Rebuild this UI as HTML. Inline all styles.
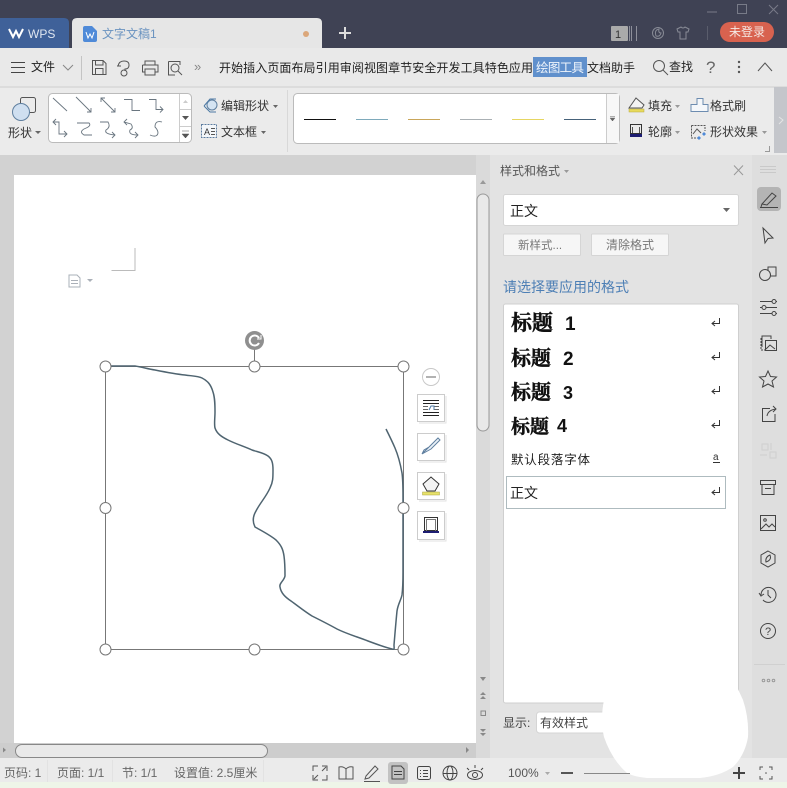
<!DOCTYPE html>
<html><head><meta charset="utf-8"><style>
html,body{margin:0;padding:0;background:#fff;width:787px;height:788px;overflow:hidden}
svg{display:block}
text{font-family:"Liberation Sans","Noto Sans CJK SC",sans-serif;font-size:12px;fill:#333}
.i{fill:none;stroke:#555;stroke-width:1}
.d{fill:none;stroke:#6a7680;stroke-width:.9}
.a{fill:#666}
.h{font-weight:bold;fill:#111;stroke:#111;stroke-width:.45;font-family:"Liberation Sans","Noto Serif CJK SC",serif}
.n{font-weight:bold;fill:#111}
</style></head><body>
<svg width="787" height="788" viewBox="0 0 787 788" xmlns="http://www.w3.org/2000/svg">
<!-- backgrounds -->
<rect width="787" height="788" fill="#cfcfcf"/>
<rect width="787" height="48" fill="#3f4254"/>
<path d="M0 18H64Q69 18 69 23V48H0Z" fill="#3f6199"/>
<path d="M72 48V23Q72 18 77 18H317Q322 18 322 23V48Z" fill="#e6e6e6"/>
<rect y="48" width="787" height="38" fill="#e9e9e9"/>
<rect y="86" width="787" height="2" fill="#dcdcdc"/>
<rect y="88" width="787" height="67" fill="#ebebeb"/>
<rect y="155" width="490" height="588" fill="#d2d2d2"/>
<rect x="14" y="175" width="462" height="568" fill="#fff"/>
<rect x="476" y="155" width="14" height="603" fill="#dadada"/>
<rect x="490" y="155" width="262" height="603" fill="#e3e3e3"/>
<rect x="752" y="155" width="35" height="603" fill="#dedede"/>
<rect y="743" width="476" height="15" fill="#cdcdcd"/>
<rect y="758" width="787" height="24" fill="#ebebeb"/>
<rect y="782" width="787" height="6" fill="#eef5e8"/>

<!-- title tabs -->
<path d="M9 29L13 37L16 31L19 37L23 29" fill="none" stroke="#fff" stroke-width="2"/>
<text x="28" y="38" style="fill:#dfe6f0;font-size:12px">WPS</text>
<path d="M83 28Q83 26 85 26H92L97 31V40Q97 42 95 42H85Q83 42 83 40Z" fill="#4f8ad8"/>
<path d="M86 32L88 38L90 34L92 38L94 32" fill="none" stroke="#fff" stroke-width="1"/>
<text x="102" y="38" style="fill:#6a93c0;font-size:12px">文字文稿1</text>
<circle cx="306" cy="34" r="3" fill="#dba77a"/>
<path d="M345 27V39M339 33H351" stroke="#ddd" stroke-width="2" fill="none"/>
<!-- window controls -->
<path d="M707 12H717" stroke="#787b88" stroke-width="1"/>
<rect x="737.500" y="4.500" width="9" height="9" fill="none" stroke="#787b88"/>
<path d="M769 5L778 14M778 5L769 14" stroke="#787b88" fill="none"/>
<rect x="611" y="26" width="17" height="15" rx="1" fill="#aaa"/>
<text x="615" y="38" style="font-size:11px;fill:#333">1</text>
<path d="M629.500 26V41M631.500 26V41M636.500 26V41" stroke="#8d8f9a"/>
<circle cx="658" cy="33" r="5.500" fill="none" stroke="#888b96"/>
<path d="M656 36Q654 30 659 29Q658 33 661 33Q660 37 656 36Z" fill="none" stroke="#888b96"/>
<path d="M677 29L681 27Q683 29 685 27L689 29L688 32L686 32V39H680V32L678 32Z" fill="none" stroke="#888b96"/>
<path d="M707.500 26V40" stroke="#5a5d6c"/>
<rect x="720" y="22" width="54" height="20" rx="10" fill="#d8624f"/>
<text x="729" y="36" style="font-size:12px;fill:#f5e8e4">未登录</text>

<!-- toolbar -->
<path d="M11 62.500H25M11 67.500H25M11 72.500H25" stroke="#444" fill="none"/>
<text x="31" y="71" style="font-size:12px;fill:#222">文件</text>
<path d="M63 65L68 70L73 65" class="i" style="stroke:#888"/>
<path d="M81.500 56V80" stroke="#c4c4c4"/>
<path d="M92.500 60.500H103L106 63.500V74.500H92.500ZM95.500 60.500V65H103V60.500M95.500 74.500V68.500H103V74.500" class="i"/>
<path d="M118 66Q119 61 124 61Q129 61 129 65Q129 69 125 69V71M117 66H121" class="i"/><circle cx="124" cy="73" r="3" class="i"/>
<path d="M145 65V61H155V65M142.500 65H158V72H155M145 72H142.500V65M145 69H155V75H145Z" class="i"/>
<path d="M168.500 61.500H180V65M168.500 61.500V75H175" class="i"/><circle cx="175" cy="68" r="4" class="i"/><path d="M178 71L182 75" class="i"/>
<text x="194" y="71" style="font-size:13px;fill:#888">»</text>
<text x="219" y="72" style="font-size:12px;fill:#222" textLength="314">开始插入页面布局引用审阅视图章节安全开发工具特色应用</text>
<rect x="533" y="57" width="54" height="20" fill="#6090cc"/>
<text x="536" y="72" style="font-size:12.500px;fill:#eef4fb" textLength="48">绘图工具</text>
<text x="587" y="72" style="font-size:12px;fill:#222" textLength="48">文档助手</text>
<circle cx="659" cy="66" r="5.500" class="i"/><path d="M663 70L668 75" class="i"/>
<text x="669" y="71" style="font-size:12px;fill:#222">查找</text>
<text x="706" y="73" style="font-size:17px;fill:#666">?</text>
<circle cx="739" cy="62" r="1.200" fill="#555"/><circle cx="739" cy="67" r="1.200" fill="#555"/><circle cx="739" cy="72" r="1.200" fill="#555"/>
<path d="M758 71L765 63L772 71" class="i"/>

<!-- ribbon left -->
<rect x="20.500" y="97.500" width="15" height="15" rx="2" fill="none" stroke="#555"/>
<circle cx="21" cy="112" r="8.500" fill="#cfdff0" stroke="#5f7f9f"/>
<text x="8" y="137" style="font-size:12px">形状</text><path d="M35 131H41L38 134Z" class="a"/>
<rect x="48.500" y="93.500" width="143" height="49" rx="4" fill="#fff" stroke="#bbb"/>
<path d="M179.500 94V142M180 109.500H191M180 126.500H191" stroke="#ccc"/>
<path d="M183 103L185.500 100L188 103Z" fill="#ccc"/><path d="M182 116H189L185.500 120Z" fill="#555"/><path d="M182 134H189L185.500 138ZM182 131H189" fill="#555" stroke="#555" stroke-width=".5"/>
<g class="d">
<path d="M53 98L67 111"/>
<path d="M76 97L91 112M91 108V112H87" />
<path d="M101 98L115 112M101 102V98H105M115 108V112H111"/>
<path d="M124 99.500H132V110.500H140"/>
<path d="M149 99.500H156V109.500H163M160 106.500L163 109.500L160 112.500"/>
<path d="M53 122H59V134H67M64 131L67 134L64 137M56 119L53 122L56 125"/>
<path d="M77 123H89Q92 126 84 129Q79 132 84 135H92"/>
<path d="M100 122H108Q111 127 106 130Q104 134 115 135M112 132L115 135L112 138"/>
<path d="M124 122L131 124Q134 128 130 130Q128 135 138 135M135 132L138 135L135 138M127 119L124 122L127 125"/>
<path d="M162 122Q155 120 155 127Q158 130 158 133Q157 138 150 135"/>
</g>
<circle cx="212" cy="105" r="5" fill="#d5e4f2" stroke="#5f7f9f"/>
<path d="M204 106L210 99H216M204 106L210 112H216" fill="none" stroke="#4d7aa5"/>
<text x="221" y="110" style="font-size:12px" textLength="48">编辑形状</text><path d="M273 105H278L275.500 108Z" class="a"/>
<rect x="201.500" y="124.500" width="15" height="13" fill="#f4f7fa" stroke="#5d7da0" stroke-dasharray="2 1"/>
<text x="204" y="135" style="font-size:9px">A</text><path d="M211 128.500H215M211 131.500H215M211 134.500H215" stroke="#555" fill="none"/>
<text x="221" y="136" style="font-size:12px" textLength="36">文本框</text><path d="M261 131H266L263.500 134Z" class="a"/>
<path d="M287.500 90V152" stroke="#d8d8d8"/>
<!-- line styles -->
<rect x="293.500" y="93.500" width="326" height="50" rx="4" fill="#fff" stroke="#bbb"/>
<rect x="607" y="94" width="12" height="49" fill="#f7f7f7"/>
<path d="M606.500 94V143" stroke="#ccc"/>
<path d="M304 119.500H336" stroke="#111"/><path d="M356 119.500H388" stroke="#7eaabb"/><path d="M408 119.500H440" stroke="#c9a65a"/><path d="M460 119.500H492" stroke="#aab0b4"/><path d="M512 119.500H544" stroke="#e6d662"/><path d="M564 119.500H596" stroke="#46627a"/>
<path d="M610 116.500H615M610 118H615L612.500 121Z" fill="#666" stroke="#666" stroke-width=".5"/>
<!-- ribbon right -->
<path d="M629 108L636 98L644 105L642 108Z" fill="#f3f3f3" stroke="#555"/><rect x="629" y="109" width="15" height="3" fill="#e8da5c" stroke="#b5a83c" stroke-width=".5"/>
<text x="648" y="110" style="font-size:12px">填充</text><path d="M675 105H680L677.500 108Z" fill="#999"/>
<path d="M691 111.500V104.500H697V98.500H703V104.500H708V111.500Z" fill="#f4f7fa" stroke="#6d8cb0"/>
<text x="710" y="110" style="font-size:12px">格式刷</text>
<rect x="630.500" y="124.500" width="11" height="9" fill="none" stroke="#333"/><path d="M632.500 127V133M639.500 127V133" stroke="#555"/><rect x="630" y="134" width="12" height="3" fill="#1d1d72"/>
<text x="648" y="136" style="font-size:12px">轮廓</text><path d="M675 131H680L677.500 134Z" fill="#999"/>
<path d="M691.500 125.500H705V131M691.500 125.500V138H699" class="i" stroke-dasharray="2 1"/><path d="M693 134L697 129L701 133" class="i"/><path d="M704 132L706 134L704 136L702 134ZM699 136L701 138L699 140L697 138Z" fill="#4f8ad8"/>
<text x="710" y="136" style="font-size:12px">形状效果</text><path d="M762 131H767L764.500 134Z" fill="#999"/>
<path d="M765 151.500H769.500V146" fill="none" stroke="#999"/>
<rect x="774" y="87" width="13" height="66" fill="#c4c6cb"/>
<path d="M779 117L783 120L779 124" fill="none" stroke="#e5e5e5"/>

<!-- page crop mark and doc icon -->
<path d="M111.500 270.500H135V248" fill="none" stroke="#bbb"/>
<path d="M69 275H77L80 278V287H69ZM71 280.500H78M71 283.500H78" fill="none" stroke="#aab0b8"/>
<path d="M87 279H93L90 282Z" fill="#aab0b8"/>

<!-- shape selection -->
<rect x="105.500" y="366.500" width="298" height="283" fill="none" stroke="#777"/>
<path d="M254.500 349V366" stroke="#777"/>
<circle cx="254.500" cy="340.500" r="9.500" fill="#8f8f8f"/>
<path d="M259 338A5 5 0 1 0 259 343" fill="none" stroke="#fff" stroke-width="2"/><path d="M257 339H261V335" fill="none" stroke="#fff"/>
<path d="M110 366L135 366C142 367 148 369 155 370C165 372 175 374 185 375C192 376 198 376 202 378C208 381 211 385 213 392C215 398 215 405 215 412C215 418 214 424 215 428C217 434 222 437 228 440C236 444 243 446 252 450C258 452 264 453 268 456C272 459 273 463 273 470C273 478 273 482 270 488C266 497 260 503 256 511C253 516 252 521 255 527C262 531 270 535 276 540C281 545 283 549 284 556C285 563 285 570 285 576C284 581 279 583 280 587C281 593 285 597 291 601C298 606 304 611 312 616C320 620 328 624 337 629C347 634 358 637 368 641C376 644 384 647 392 649C395 650 394 648 394 645C395 633 396 621 397 611C398 604 401 600 402 595C403 587 403 580 403 572L403 497C403 488 403 480 402 473C400 462 398 455 395 448C392 441 389 435 386 429" fill="none" stroke="#4f6470" stroke-width="1.500" stroke-linejoin="round"/>
<g fill="#fff" stroke="#777">
<circle cx="105.500" cy="366.500" r="5.500"/><circle cx="254.500" cy="366.500" r="5.500"/><circle cx="403.500" cy="366.500" r="5.500"/>
<circle cx="105.500" cy="508" r="5.500"/><circle cx="403.500" cy="508" r="5.500"/>
<circle cx="105.500" cy="649.500" r="5.500"/><circle cx="254.500" cy="649.500" r="5.500"/><circle cx="403.500" cy="649.500" r="5.500"/>
</g>
<!-- side buttons -->
<circle cx="431" cy="377" r="8.500" fill="#fff" stroke="#c8c8c8"/><path d="M426 377H436" stroke="#999" stroke-width="1.500"/>
<g fill="#fff" stroke="#ccc">
<rect x="417.500" y="394.500" width="27" height="27"/><rect x="417.500" y="433.500" width="27" height="27"/><rect x="417.500" y="472.500" width="27" height="27"/><rect x="417.500" y="511.500" width="27" height="28"/>
</g>
<path d="M446 396V423H419M446 435V462H419M446 474V501H419M446 513V541H419" fill="none" stroke="#e2e2e2"/>
<path d="M423 400.500H439M423 403.500H439M423 412.500H439M423 415.500H439" stroke="#222"/>
<path d="M423 406.500H428M434 406.500H439M423 409.500H428M434 409.500H439" stroke="#666"/><path d="M429 410L431 406H434V410" fill="none" stroke="#4d7aa5"/>
<path d="M422 454L431 449L440 440L438 438L429 447ZM429 447L424 450L422 454" fill="#eaf1f8" stroke="#5f7f9f"/>
<path d="M423 484L431 477L439 484L435 491H427Z" fill="#f3f3f3" stroke="#333"/><rect x="422.500" y="492" width="17" height="3" fill="#e8e26a" stroke="#a9a340" stroke-width=".5"/>
<rect x="424.500" y="517.500" width="13" height="13" fill="none" stroke="#333"/><path d="M426.500 531V519.500H435.500V531" fill="none" stroke="#777"/><rect x="423" y="531" width="16" height="2" fill="#1d1d72"/>

<!-- v scrollbar -->
<path d="M480 184L483 180L486 184Z" fill="#999"/>
<rect x="477" y="194" width="12" height="237" rx="6" fill="#e9e9e9" stroke="#999"/>
<path d="M480 677H486L483 681Z" fill="#888"/>
<path d="M480 695L483 692L486 695ZM480 699L483 696L486 699Z" fill="#888"/>
<rect x="481" y="711" width="4.500" height="4.500" fill="none" stroke="#888"/>
<path d="M480 729L483 732L486 729ZM480 733L483 736L486 733Z" fill="#888"/>
<!-- h scrollbar -->
<path d="M6 750L3 747.500V752.500Z" fill="#888"/>
<rect x="15.500" y="744.500" width="252" height="13" rx="6.500" fill="#e9e9e9" stroke="#888"/>
<path d="M466 747V753L469 750Z" fill="#888"/>

<!-- styles panel -->
<text x="500" y="175" style="font-size:12px;fill:#555">样式和格式</text>
<path d="M564 170H569L566.500 173Z" fill="#999"/>
<path d="M734 165.500L743 175M743 165.500L734 175" fill="none" stroke="#999"/>
<rect x="503.500" y="194.500" width="235" height="31" rx="2" fill="#fff" stroke="#d5d5d5"/>
<text x="510" y="216" style="font-size:14px;fill:#222">正文</text>
<path d="M723 208H730L726.500 212Z" fill="#666"/>
<rect x="503.500" y="234" width="77" height="21.500" rx="1" fill="#f6f6f6" stroke="#d5d5d5"/>
<rect x="591.500" y="234" width="77" height="21.500" rx="1" fill="#f6f6f6" stroke="#d5d5d5"/>
<text x="518" y="249" style="font-size:11.500px;fill:#777">新样式...</text>
<text x="606" y="249" style="font-size:12px;fill:#777">清除格式</text>
<text x="503" y="292" style="font-size:14px;fill:#4d7fb5">请选择要应用的格式</text>
<rect x="503.500" y="304" width="235" height="399" rx="2" fill="#fff" stroke="#cfcfcf"/>
<text x="511" y="330" class="h" style="font-size:21px">标题</text>
<text x="565" y="330" class="n" style="font-size:19px">1</text>
<text x="511" y="365" class="h" style="font-size:20px">标题</text>
<text x="563" y="365" class="n" style="font-size:19px">2</text>
<text x="511" y="399" class="h" style="font-size:20px">标题</text>
<text x="563" y="399" class="n" style="font-size:18px">3</text>
<text x="511" y="433" class="h" style="font-size:19px">标题</text>
<text x="557" y="432" class="n" style="font-size:18px">4</text>
<text x="511" y="464" style="font-size:12.500px;fill:#222" textLength="79">默认段落字体</text>
<rect x="506.500" y="476.500" width="219" height="32" fill="#fff" stroke="#aebbbf"/>
<text x="510" y="498" style="font-size:14px;fill:#222">正文</text>
<g fill="none" stroke="#333">
<path d="M719.500 318V323.500H712M715 321L712 323.500L715 326"/>
<path d="M719.500 352V357.500H712M715 355L712 357.500L715 360"/>
<path d="M719.500 386V391.500H712M715 389L712 391.500L715 394"/>
<path d="M719.500 420V425.500H712M715 423L712 425.500L715 428"/>
<path d="M719.500 487V492.500H712M715 490L712 492.500L715 495"/>
</g>
<text x="713" y="460" style="font-size:10px;fill:#333">a</text><path d="M713 462.500H720" stroke="#333"/>
<text x="503" y="727" style="font-size:12px;fill:#444">显示:</text>
<rect x="536.500" y="712" width="80" height="21" rx="3" fill="#fff" stroke="#d5d5d5"/>
<text x="540" y="727" style="font-size:12px;fill:#444">有效样式</text>
<!-- white blob -->
<path d="M604 700L737 687L743 700Q749 718 748 737Q745 755 733 767Q720 776 700 778L647 778Q635 777 627 773Q612 760 604 737Q600 720 604 700Z" fill="#fff"/>

<!-- right sidebar -->
<path d="M760 166.500H776M760 169.500H776M760 172.500H776" stroke="#c9c9c9"/>
<rect x="757" y="187" width="24" height="24" rx="4" fill="#b4b4b4"/>
<g fill="none" stroke="#444">
<path d="M762 204L772 193L776 196L767 205ZM762 204L761 207M760 207.500H778"/>
<path d="M763 228L773 238L768 238.500L765 243Z"/>
<circle cx="765" cy="275" r="5.500"/><path d="M768 271V267H776V276H770"/>
<path d="M760 301.500H772M776 301.500H777M760 307.500H762M766 307.500H777M760 313.500H772M776 313.500H777"/><circle cx="774" cy="301.500" r="2"/><circle cx="764" cy="307.500" r="2"/><circle cx="774" cy="313.500" r="2"/>
<path d="M762 347V336H771V339"/><rect x="765.500" y="340.500" width="11" height="10"/><path d="M766 349L770 345L775 349"/><path d="M761 338V350H765" stroke-dasharray="2 1"/>
<path d="M768 371L770.500 376.500L776.500 377L772 381L773.500 387L768 384L762.500 387L764 381L759.500 377L765.500 376.500Z"/>
<path d="M770 408.500H762.500V421.500H775V414M767 416Q768 410 776 409M773 406L776 409L773 412"/>
</g>
<g fill="none" stroke="#cfcfcf"><rect x="762" y="444" width="6" height="6"/><rect x="770" y="452" width="6" height="6"/><path d="M760 455H767M771 443V450"/></g>
<g fill="none" stroke="#444">
<rect x="760.500" y="480.500" width="15" height="4"/><path d="M762 485V494.500H774V485M765 488.500H771"/>
<rect x="760.500" y="515.500" width="15" height="15"/><circle cx="765" cy="520" r="1.300"/><path d="M761 529L766 524L769 527L772 524L775 527"/>
<path d="M768 551L775 555V563L768 567L761 563V555Z"/><path d="M766 562Q765 557 770 555Q772 560 766 562Z"/>
<path d="M761 595A7.500 7.500 0 1 1 763 600M759 593L761 596L764 594M768 590V595L771 598"/>
<circle cx="768" cy="631" r="7.500"/>
</g>
<text x="765" y="635" style="font-size:11px;fill:#444">?</text>
<path d="M754 664.500H785" stroke="#d0d0d0"/>
<circle cx="763.500" cy="680.500" r="1.300" fill="none" stroke="#999"/><circle cx="768.500" cy="680.500" r="1.300" fill="none" stroke="#999"/><circle cx="773.500" cy="680.500" r="1.300" fill="none" stroke="#999"/>

<!-- status bar -->
<text x="4" y="777" style="font-size:12px;fill:#666">页码: 1</text>
<text x="57" y="777" style="font-size:12px;fill:#666">页面: 1/1</text>
<text x="122" y="777" style="font-size:12px;fill:#666">节: 1/1</text>
<text x="174" y="777" style="font-size:12px;fill:#666">设置值: 2.5厘米</text>
<path d="M47.500 760V782M112.500 760V782M263.500 760V782" stroke="#e2e2e2"/>
<g fill="none" stroke="#555">
<path d="M313 771V766H318M322 766H327V771M327 775V780H322M318 780H313V775M314 779L318 775M326 767L322 771"/>
<path d="M346 769Q343 766 339 767V779H353V767Q349 766 346 769V779"/>
<path d="M366 776L375 766L378 769L369 778L365 779ZM364 781.500H380"/>
</g>
<rect x="388" y="762" width="20" height="22" rx="3" fill="#c2c2c2"/>
<g fill="none" stroke="#444">
<path d="M392 766H401L404 769V779H392ZM394 771.500H402M394 774.500H402"/>
<rect x="417.500" y="766.500" width="13" height="13" rx="2"/><path d="M420 770.500H421M423 770.500H428M420 773.500H421M423 773.500H428M420 776.500H421M423 776.500H428"/>
<circle cx="450" cy="773" r="7"/><ellipse cx="450" cy="773" rx="3" ry="7"/><path d="M443 773.500H457"/>
<ellipse cx="475" cy="775" rx="7.500" ry="4.500"/><circle cx="475" cy="775" r="2.500"/><path d="M467 768L469 770M475 765V768M483 768L481 770"/>
</g>
<text x="508" y="777" style="font-size:12px;fill:#555">100%</text><path d="M545 772H550L547.500 775Z" fill="#aaa"/>
<path d="M561 773H573" stroke="#555" stroke-width="2"/>
<path d="M584 773.500H630" stroke="#888"/>
<path d="M739 767V779M733 773H745" stroke="#444" stroke-width="2"/>
<path d="M760 770V767H763M769 767H772V770M772 776V779H769M763 779H760V776" fill="none" stroke="#555"/>
<circle cx="766" cy="773" r=".8" fill="#555"/>
</svg>
</body></html>
